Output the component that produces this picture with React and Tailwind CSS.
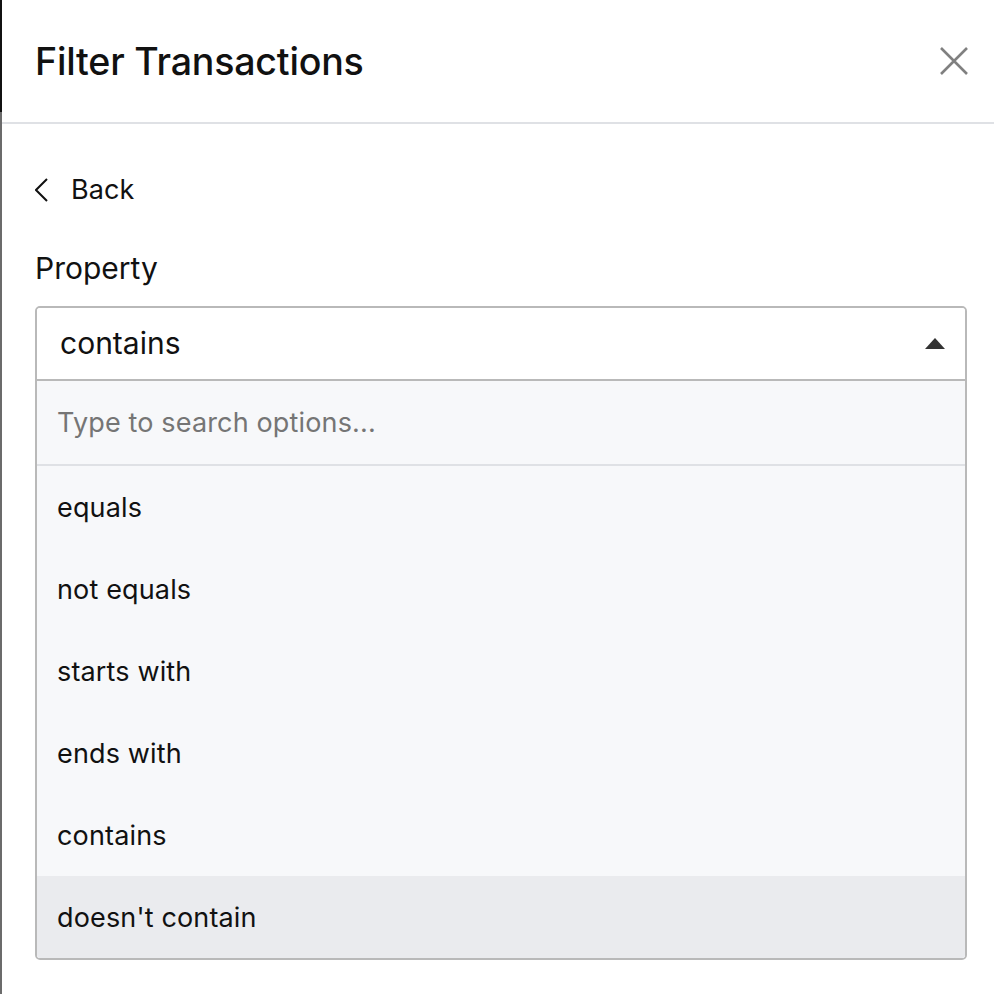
const options = ["equals", "not equals", "starts with", "ends with", "contains", "doesn't contain"];

export default function App() {
  const active = "doesn't contain";

  return (
    <div className="flex h-[994px] w-[994px] bg-white font-['Inter',sans-serif] text-[#111]">
      {/* backdrop edge */}
      <div className="flex w-[2px] flex-col">
        <div className="h-[112px] bg-[#111]" />
        <div className="flex-1 bg-[#6b6b6b]" />
      </div>

      <div className="flex flex-1 flex-col">
        {/* Header */}
        <div className="flex h-[124px] items-center justify-between border-b-2 border-[#dfe1e5] pl-[33px] pr-[26px]">
          <h2 className="mt-[2px] text-[37.6px] font-medium tracking-[-0.2px]">Filter Transactions</h2>
          <button>
            <svg width="28" height="28" viewBox="0 0 28 28">
              <path d="M1 1 L27 27 M27 1 L1 27" stroke="#808080" strokeWidth="2.6" />
            </svg>
          </button>
        </div>

        <div className="pl-[33px] pr-[27px]">
          <button className="mt-[46px] flex items-center gap-[23px] text-[27px] tracking-[0.1px]">
            <svg width="13" height="24" viewBox="0 0 13 24">
              <path d="M12 1 L1 12 L12 23" fill="none" stroke="#111" strokeWidth="2" />
            </svg>
            Back
          </button>

          <div className="mt-[35px] text-[30px]">Property</div>

          <div className="mt-[15px] overflow-hidden rounded-[5px] border-2 border-[#b9b9b9]">
            <div className="flex h-[71px] items-center justify-between bg-white pl-[23px] pr-[20px] text-[30px]">
              contains
              <svg width="20" height="11" viewBox="0 0 20 11">
                <path d="M10 0 L20 11 L0 11 Z" fill="#333" />
              </svg>
            </div>
            <div className="border-t-2 border-[#b9b9b9] bg-[#f7f8fa] text-[27px] tracking-[0.15px]">
              <div className="flex h-[85px] items-center border-b-2 border-[#dfe1e5] px-[20px] pt-[3px] text-[#757575]">
                Type to search options...
              </div>
              {options.map((o) => (
                <div
                  key={o}
                  className={
                    o === active
                      ? "flex h-[82px] items-center bg-[#eaebee] px-[20px] pt-[3px]"
                      : "flex h-[82px] items-center px-[20px] pt-[3px]"
                  }
                >
                  {o}
                </div>
              ))}
            </div>
          </div>
        </div>
      </div>
    </div>
  );
}
